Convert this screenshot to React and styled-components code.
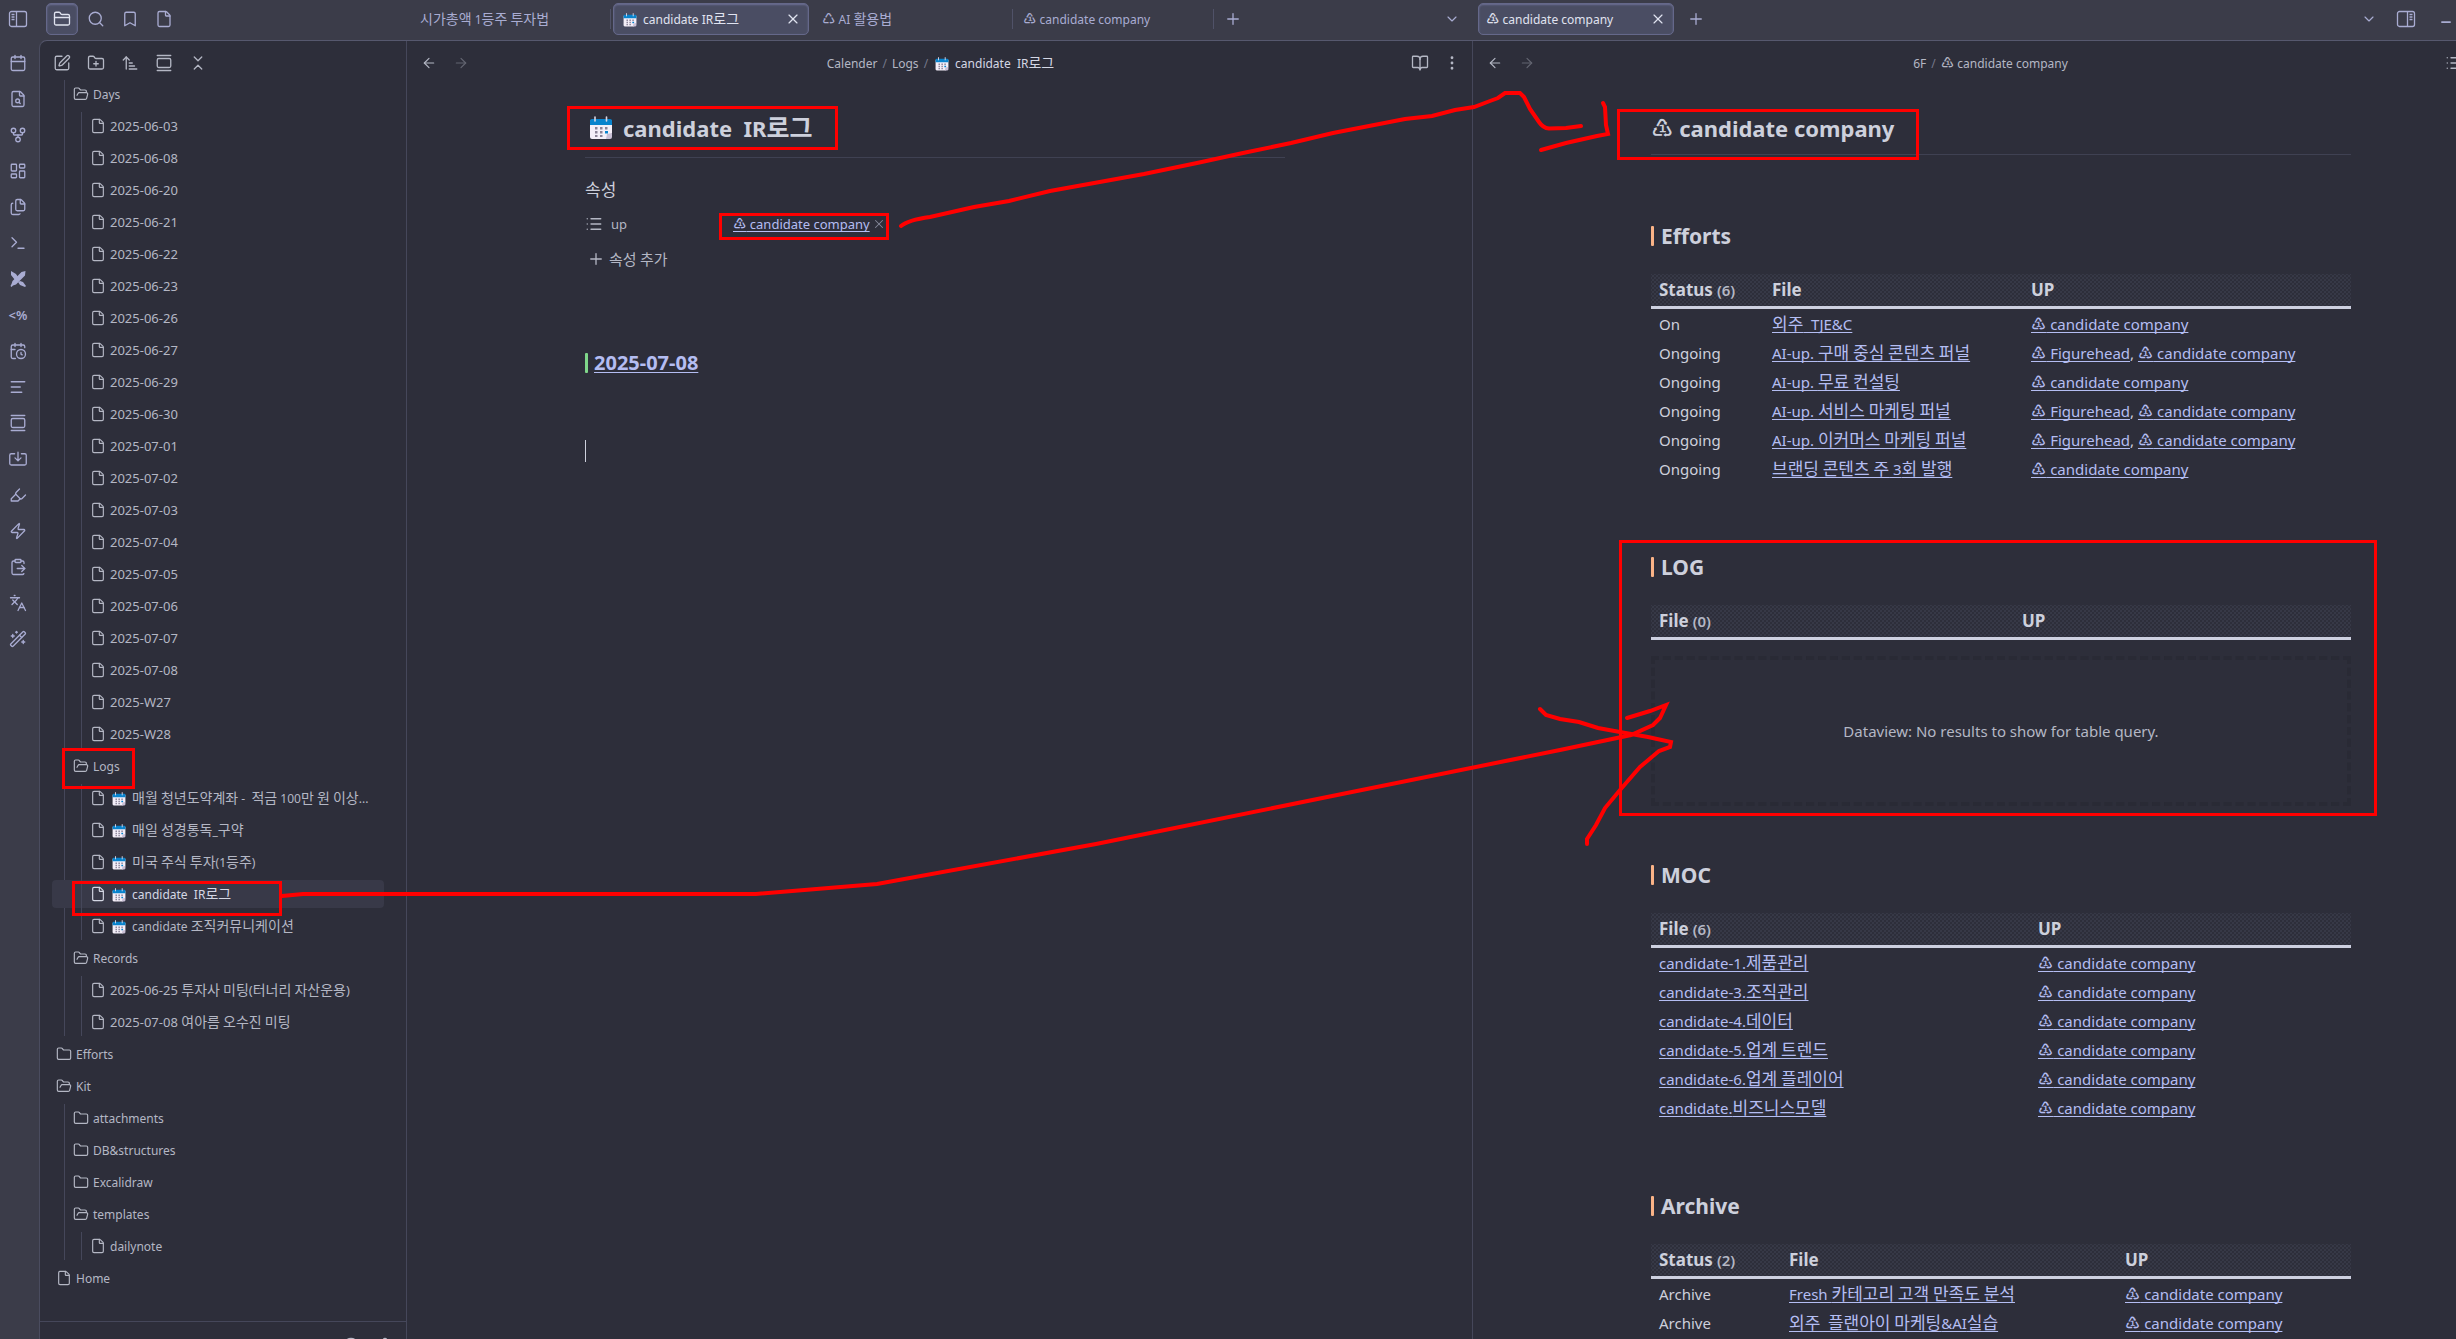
import React from "react";
import styled, { createGlobalStyle, css } from "styled-components";
import {
    AlignLeft,
    ArrowLeft,
    ArrowRight,
    ArrowUpNarrowWide,
    BookOpen,
    Bookmark,
    Calendar,
    CalendarClock,
    ChevronDown,
    ChevronsDownUp,
    ChevronsUpDown,
    CircleHelp,
    ClipboardPaste,
    EllipsisVertical,
    File,
    FileSearch,
    Files,
    Folder,
    FolderClosed,
    FolderOpen,
    FolderPlus,
    GalleryVertical,
    GitFork,
    Highlighter,
    Languages,
    LayoutDashboard,
    List,
    Minus,
    Plus,
    Search,
    Settings,
    SquarePen,
    Terminal,
    WandSparkles,
    X,
    Zap,
} from "lucide-react";

const days = [
    "2025-06-03", "2025-06-08", "2025-06-20", "2025-06-21", "2025-06-22",
    "2025-06-23", "2025-06-26", "2025-06-27", "2025-06-29", "2025-06-30",
    "2025-07-01", "2025-07-02", "2025-07-03", "2025-07-04", "2025-07-05",
    "2025-07-06", "2025-07-07", "2025-07-08", "2025-W27", "2025-W28",
];

const calendarTree = [
    { name: "Days", children: days.map((name) => ({ name })) },
    {
        name: "Logs",
        children: [
            { name: "매월 청년도약계좌 -  적금 100만 원 이상...", emoji: true },
            { name: "매일 성경통독_구약", emoji: true },
            { name: "미국 주식 투자(1등주)", emoji: true },
            { name: "candidate  IR로그", emoji: true, active: true },
            { name: "candidate 조직커뮤니케이션", emoji: true },
        ],
    },
    {
        name: "Records",
        children: [
            { name: "2025-06-25 투자사 미팅(터너리 자산운용)" },
            { name: "2025-07-08 여아름 오수진 미팅" },
        ],
    },
];

const rootTree = [
    { name: "Efforts", closed: true },
    {
        name: "Kit",
        children: [
            { name: "attachments", closed: true },
            { name: "DB&structures", closed: true },
            { name: "Excalidraw", closed: true },
            { name: "templates", children: [{ name: "dailynote" }] },
        ],
    },
    { name: "Home" },
];

const company = ["candidate company"];
const both = ["Figurehead", "candidate company"];

const efforts = [
    ["On", "외주  TJE&C", company],
    ["Ongoing", "AI-up. 구매 중심 콘텐츠 퍼널", both],
    ["Ongoing", "AI-up. 무료 컨설팅", company],
    ["Ongoing", "AI-up. 서비스 마케팅 퍼널", both],
    ["Ongoing", "AI-up. 이커머스 마케팅 퍼널", both],
    ["Ongoing", "브랜딩 콘텐츠 주 3회 발행", company],
];

const moc = [
    ["candidate-1.제품관리", company],
    ["candidate-3.조직관리", company],
    ["candidate-4.데이터", company],
    ["candidate-5.업계 트렌드", company],
    ["candidate-6.업계 플레이어", company],
    ["candidate.비즈니스모델", company],
];

const archive = [
    ["Archive", "Fresh 카테고리 고객 만족도 분석", company],
    ["Archive", "외주  플랜아이 마케팅&AI실습", company],
];

// Hangul and the recycling marks are set a little larger than the latin text
function Mixed({ children }) {
    return children.split(/([가-힣]+(?: +[가-힣]+)*|[♳♺])/).map((part, i) => {
        if (/[♳♺]/.test(part)) return <Mark key={i}>{part}</Mark>;
        if (/[가-힣]/.test(part)) return <Ko key={i}>{part}</Ko>;
        return part;
    });
}

function CalendarEmoji({ size }) {
    return (
        <Emoji width={size} height={size} viewBox="0 0 24 24" aria-hidden="true">
            <path d="M3 4h18a2 2 0 0 1 2 2v11l-5 6H3a2 2 0 0 1-2-2V6a2 2 0 0 1 2-2z" fill="#f3eef8" />
            <path d="M3 3h18a2 2 0 0 1 2 2v4H1V5a2 2 0 0 1 2-2z" fill="#0883cd" />
            <path d="M23 17v4a2 2 0 0 1-2 2h-4l1-5z" fill="#c9c0d6" />
            <path d="M6 1v4M17.500 1v4" stroke="#d9d5e3" strokeWidth="1.600" strokeLinecap="round" />
            <g fill="#8b8398">
                <path d="M6 11h2.500v2.500H6zM11 11h2.500v2.500H11zM16 11h2.500v2.500H16z" />
                <path d="M6 15h2.500v2.500H6zM11 15h2.500v2.500H11z" />
                <path d="M6 19h2.500v2H6zM11 19h2.500v2H11z" />
            </g>
            <path d="M16 15h3v2.500h-3z" fill="#0883cd" />
        </Emoji>
    );
}

function PanelIcon({ right }) {
    return (
        <svg width="20" height="20" viewBox="0 0 20 20" fill="none" stroke="currentColor" strokeWidth="1.300">
            <rect x="1.500" y="2.500" width="17" height="15" rx="2" />
            {right ? (
                <path d="M11.500 3v14M13.500 5.500h3M13.500 8h3M13.500 10.500h3" />
            ) : (
                <path d="M8.500 3v14M3.500 5.500h3M3.500 8h3M3.500 10.500h3" />
            )}
        </svg>
    );
}

function ExcalidrawIcon() {
    return (
        <svg width="18" height="18" viewBox="0 0 18 18" fill="currentColor">
            <path d="M2 1l5 3 2 3-3 3-4-5zM11 11l3 1 3 4-1 1-5-2-2-3z" />
            <path d="M16.500 1l-.5 4.500-9 9-3 1L2.500 17 1.500 16l1-2 1-3 9-9z" />
        </svg>
    );
}

function TrayIcon() {
    return (
        <svg width="18" height="18" viewBox="0 0 24 24" fill="none" stroke="currentColor" strokeWidth="1.750" strokeLinecap="round" strokeLinejoin="round">
            <path d="M7.500 5H3a2 2 0 0 0-2 2v11a2 2 0 0 0 2 2h18a2 2 0 0 0 2-2V7a2 2 0 0 0-2-2h-4.500M12 3v11M8 10.500l4 4 4-4" />
        </svg>
    );
}

const line = { size: 18, strokeWidth: 1.75 };

const ribbon = [
    ["Daily note", <Calendar {...line} />],
    ["Quick switcher", <FileSearch {...line} />],
    ["Graph view", <GitFork {...line} />],
    ["Canvas", <LayoutDashboard {...line} />],
    ["Templates", <Files {...line} />],
    ["Command palette", <Terminal {...line} />],
    ["Excalidraw", <ExcalidrawIcon />],
    ["Templater", "<%"],
    ["Periodic notes", <CalendarClock {...line} />],
    ["Outline", <AlignLeft {...line} />],
    ["Cards", <GalleryVertical {...line} />],
    ["Import", <TrayIcon />],
    ["Highlighter", <Highlighter {...line} />],
    ["Run macro", <Zap {...line} />],
    ["Paste", <ClipboardPaste {...line} />],
    ["Translate", <Languages {...line} />],
    ["Wand", <WandSparkles {...line} />],
];

function TreeItem({ item, depth }) {
    const small = { size: 16, strokeWidth: 1.75 };
    const icon = item.children ? <FolderOpen {...small} /> : item.closed ? <Folder {...small} /> : <File {...small} />;

    return (
        <li>
            <TreeRow type="button" $depth={depth} $active={item.active} $numeric={/^\d{4}-/.test(item.name)}>
                {icon}
                <span>
                    {item.emoji && <CalendarEmoji size={14} />}
                    <Mixed>{item.name}</Mixed>
                </span>
            </TreeRow>
            {item.children && <TreeList items={item.children} depth={depth + 1} />}
        </li>
    );
}

function TreeList({ items, depth }) {
    return (
        <Branch $depth={depth}>
            {items.map((item) => (
                <TreeItem key={item.name} item={item} depth={depth} />
            ))}
        </Branch>
    );
}

function Up({ names }) {
    return names.map((name, i) => (
        <React.Fragment key={name}>
            {i > 0 && ", "}
            <NoteLink href="#note">
                <Mixed>{`♳ ${name}`}</Mixed>
            </NoteLink>
        </React.Fragment>
    ));
}

function Query({ title, heads, widths, count, rows }) {
    return (
        <Section $empty={rows.length === 0}>
            <Heading $color="#fab387">{title}</Heading>
            <Table>
                <colgroup>
                    {widths.map((w) => <Col key={w} $width={w} />)}
                    <col />
                </colgroup>
                <thead>
                    <tr>
                        {heads.map((head, i) => (
                            <th key={head}>
                                {head}
                                {i === 0 && <Count>({count})</Count>}
                            </th>
                        ))}
                    </tr>
                </thead>
                <tbody>
                    {rows.map((row) => {
                        const file = row[row.length - 2];
                        return (
                            <tr key={file}>
                                {row.length === 3 && <td>{row[0]}</td>}
                                <td>
                                    <NoteLink href="#note"><Mixed>{file}</Mixed></NoteLink>
                                </td>
                                <td><Up names={row[row.length - 1]} /></td>
                            </tr>
                        );
                    })}
                </tbody>
            </Table>
            {rows.length === 0 && <NoResult>Dataview: No results to show for table query.</NoResult>}
        </Section>
    );
}

function PaneHeader({ children, outline }) {
    return (
        <PaneBar>
            <PaneButton type="button" aria-label="Back"><ArrowLeft size={16} strokeWidth={1.75} /></PaneButton>
            <PaneButton type="button" aria-label="Forward" $dim><ArrowRight size={16} strokeWidth={1.75} /></PaneButton>
            <Crumbs>{children}</Crumbs>
            {outline && <PaneButton type="button" aria-label="Outline"><List {...line} /></PaneButton>}
            <PaneButton type="button" aria-label="Reading view"><BookOpen {...line} /></PaneButton>
            <PaneButton type="button" aria-label="More options"><EllipsisVertical {...line} /></PaneButton>
        </PaneBar>
    );
}

function Annotations() {
    return (
        <Ink viewBox="0 0 2456 1339" width="2456" height="1339" aria-hidden="true">
            <g strokeWidth="3">
                <path d="M568.500 107.500H836.500V148.500H568.500z" />
                <path d="M720.500 214.500H887.500V238.500H720.500z" />
                <path d="M1618.500 110.500H1917.500V158.500H1618.500z" />
                <path d="M1620.500 541.500H2375.500V814.500H1620.500z" />
                <path d="M63.500 749.500H133.500V787.500H63.500z" />
                <path d="M73.500 882.500H280.500V914.500H73.500z" />
            </g>
            <g strokeWidth="4">
                <path d="M901 226Q908 220 930 217L974 207L1009 201L1050 191L1144 174L1197 163L1243 153L1291 143L1333 133L1405 119L1432 116L1455 110L1474 107L1490 101L1498 98L1505 93H1520L1524 97L1530 109L1539 122Q1543 128 1549 128.500L1566 128L1581 126" />
                <path d="M1603 103L1605 107L1606 125L1608 134L1597 136L1566 143L1541 150" />
                <path d="M282 896L303 894H756L877 884L1096 844L1347 793L1560 750L1631 735L1653 725L1660 718L1666 705L1650 711L1627 718" />
                <path d="M1540 709L1546 715L1560 719L1579 722L1598 728L1620 732L1648 737L1671 742L1670 747L1659 751L1640 767L1620 790L1605 808L1596 825L1587 839V844" />
            </g>
        </Ink>
    );
}

function App() {
    return (
        <Shell>
            <GlobalStyle />
            <Frame>
                <TopBar>
                    <SideTabs>
                        <PanelToggle type="button" aria-label="Toggle left sidebar"><PanelIcon /></PanelToggle>
                        <SideTab type="button" aria-label="Files" $active><FolderClosed {...line} /></SideTab>
                        <SideTab type="button" aria-label="Search"><Search {...line} /></SideTab>
                        <SideTab type="button" aria-label="Bookmarks"><Bookmark {...line} /></SideTab>
                        <SideTab type="button" aria-label="Notes"><File {...line} /></SideTab>
                    </SideTabs>
                    <TabStrip>
                        <TabSlot $line>
                            <Tab type="button"><TabName><Mixed>시가총액 1등주 투자법</Mixed></TabName></Tab>
                        </TabSlot>
                        <TabSlot>
                            <Tab type="button" $active>
                                <TabName><CalendarEmoji size={14} /><Mixed>candidate IR로그</Mixed></TabName>
                                <X size={16} strokeWidth={1.75} />
                            </Tab>
                        </TabSlot>
                        <TabSlot $line>
                            <Tab type="button"><TabName><Mixed>♺ AI 활용법</Mixed></TabName></Tab>
                        </TabSlot>
                        <TabSlot $line>
                            <Tab type="button"><TabName><Mixed>♳ candidate company</Mixed></TabName></Tab>
                        </TabSlot>
                        <BarButton type="button" aria-label="New tab"><Plus {...line} /></BarButton>
                        <Spacer />
                        <BarButton type="button" aria-label="Tab list"><ChevronDown size={16} strokeWidth={1.75} /></BarButton>
                    </TabStrip>
                    <TabStrip>
                        <TabSlot>
                            <Tab type="button" $active>
                                <TabName><Mixed>♳ candidate company</Mixed></TabName>
                                <X size={16} strokeWidth={1.75} />
                            </Tab>
                        </TabSlot>
                        <BarButton type="button" aria-label="New tab"><Plus {...line} /></BarButton>
                        <Spacer />
                        <BarButton type="button" aria-label="Tab list"><ChevronDown size={16} strokeWidth={1.75} /></BarButton>
                        <BarButton type="button" aria-label="Toggle right sidebar"><PanelIcon right /></BarButton>
                        <MinimizeButton type="button" aria-label="Minimize"><Minus size={14} strokeWidth={3} /></MinimizeButton>
                    </TabStrip>
                </TopBar>
                <Main>
                    <Ribbon aria-label="Ribbon">
                        {ribbon.map(([label, icon]) => (
                            <RibbonButton type="button" key={label} aria-label={label}>{icon}</RibbonButton>
                        ))}
                    </Ribbon>
                    <Workspace>
                        <Sidebar>
                            <Toolbar>
                                <ToolButton type="button" aria-label="New note"><SquarePen {...line} /></ToolButton>
                                <ToolButton type="button" aria-label="New folder"><FolderPlus {...line} /></ToolButton>
                                <ToolButton type="button" aria-label="Sort"><ArrowUpNarrowWide {...line} /></ToolButton>
                                <ToolButton type="button" aria-label="Reveal file"><GalleryVertical {...line} /></ToolButton>
                                <ToolButton type="button" aria-label="Collapse all"><ChevronsDownUp {...line} /></ToolButton>
                            </Toolbar>
                            <Tree>
                                <TreeList items={calendarTree} depth={1} />
                                <TreeList items={rootTree} depth={0} />
                            </Tree>
                            <Vault>
                                <VaultName type="button"><ChevronsUpDown size={14} strokeWidth={1.75} />candidate</VaultName>
                                <ToolButton type="button" aria-label="Help"><CircleHelp {...line} /></ToolButton>
                                <ToolButton type="button" aria-label="Settings"><Settings {...line} /></ToolButton>
                            </Vault>
                        </Sidebar>

                        <Pane>
                            <PaneHeader>
                                <span>Calender</span><i>/</i><span>Logs</span><i>/</i>
                                <Current><CalendarEmoji size={14} /><Mixed>candidate  IR로그</Mixed></Current>
                            </PaneHeader>
                            <Scroll>
                                <Note>
                                    <Title><CalendarEmoji size={24} /><Mixed>candidate  IR로그</Mixed></Title>
                                    <PropsTitle><Mixed>속성</Mixed></PropsTitle>
                                    <PropRow>
                                        <PropKey><List {...line} />up</PropKey>
                                        <NoteLink href="#note"><Mixed>♳ candidate company</Mixed></NoteLink>
                                        <RemoveButton type="button" aria-label="Remove"><X size={14} strokeWidth={1.75} /></RemoveButton>
                                    </PropRow>
                                    <AddProp type="button"><Plus {...line} /><Mixed>속성 추가</Mixed></AddProp>
                                    <DateHeading $color="#7fd68a">
                                        <NoteLink href="#2025-07-08">2025-07-08</NoteLink>
                                    </DateHeading>
                                    <Caret />
                                </Note>
                            </Scroll>
                        </Pane>

                        <Pane>
                            <PaneHeader outline>
                                <span>6F</span><i>/</i><span><Mixed>♳ candidate company</Mixed></span>
                            </PaneHeader>
                            <Scroll>
                                <Note>
                                    <Title><Mixed>♳ candidate company</Mixed></Title>
                                    <Queries>
                                        <Query title="Efforts" heads={["Status", "File", "UP"]} widths={[113, 259]} count={6} rows={efforts} />
                                        <Query title="LOG" heads={["File", "UP"]} widths={[363]} count={0} rows={[]} />
                                        <Query title="MOC" heads={["File", "UP"]} widths={[379]} count={6} rows={moc} />
                                        <Query title="Archive" heads={["Status", "File", "UP"]} widths={[130, 336]} count={2} rows={archive} />
                                    </Queries>
                                </Note>
                            </Scroll>
                        </Pane>
                    </Workspace>
                </Main>
            </Frame>
            <Annotations />
        </Shell>
    );
}

export default App;

const GlobalStyle = createGlobalStyle`
    * {
        box-sizing: border-box;
    }

    body {
        margin: 0;
        background: #2d2e3a;
        color: #cdd0dc;
        font-family: "Noto Sans", "Noto Sans CJK KR", sans-serif;
        font-size: 12px;
        --ko: 14px;
        --mark: 15px;
    }

    button {
        display: flex;
        align-items: center;
        justify-content: center;
        padding: 0;
        border: 0;
        background: none;
        color: inherit;
        font: inherit;
        cursor: pointer;
    }

    ul {
        margin: 0;
        padding: 0;
        list-style: none;
    }

    svg {
        flex-shrink: 0;
    }
`;

const Ko = styled.span`
    font-family: "Noto Sans CJK KR", sans-serif;
    font-size: var(--ko);
    line-height: 1;
`;

const Mark = styled.span`
    font-family: "DejaVu Sans", sans-serif;
    font-size: var(--mark);
    line-height: 1;
`;

const Emoji = styled.svg`
    margin: 0 6px 0 2px;
    vertical-align: middle;
`;

const Shell = styled.div`
    position: relative;
    height: 100vh;
    overflow: hidden;
`;

const Frame = styled.div`
    display: flex;
    flex-direction: column;
    height: calc(100vh + 30px);
    margin-right: -83px;
    background: #3b3c49;
`;

const TopBar = styled.header`
    display: flex;
    flex: 0 0 40px;
    color: #a9acd2;
`;

const SideTabs = styled.div`
    display: flex;
    flex: 0 0 407px;
    padding-top: 3px;
`;

const PanelToggle = styled.button`
    width: 36px;
    height: 32px;
    margin-right: 9px;
`;

const raised = css`
    border: 1px solid #65688a;
    border-radius: 5px;
    background: #4a4d63;
    box-shadow: inset 0 1px 2px #6d7094;
    color: #e0e3f0;
`;

const SideTab = styled.button`
    width: 32px;
    height: 32px;
    margin: 0 1px;
    ${(props) => props.$active && raised}
`;

const TabStrip = styled.div`
    display: flex;
    flex: 0 0 calc((100% - 407px) / 2);
    min-width: 0;
    padding: 3px 3px 0;

    &:last-child {
        padding-right: 71px;
    }
`;

const TabSlot = styled.div`
    position: relative;
    width: 201px;
    padding: 0 3px 0 2px;

    ${(props) => props.$line && css`
        &::after {
            content: "";
            position: absolute;
            top: 6px;
            right: 0;
            width: 1px;
            height: 20px;
            background: #505268;
        }
    `}
`;

const Tab = styled.button`
    width: 100%;
    height: 32px;
    padding: 0 7px;
    border: 1px solid transparent;
    justify-content: space-between;
    ${(props) => props.$active && raised}
`;

const TabName = styled.span`
    white-space: pre;
`;

const BarButton = styled.button`
    width: 37px;
    height: 32px;
`;

const MinimizeButton = styled(BarButton)`
    width: 44px;
    padding-top: 6px;
`;

const Spacer = styled.div`
    flex: 1;
`;

const Main = styled.div`
    display: flex;
    flex: 1;
    min-height: 0;
`;

const Ribbon = styled.nav`
    flex: 0 0 39px;
    padding-top: 5px;
    color: #a9acd2;
`;

const RibbonButton = styled.button`
    width: 36px;
    height: 36px;
    font-size: 13px;
    font-weight: 600;
`;

const Workspace = styled.div`
    display: flex;
    flex: 1;
    min-width: 0;
    border-top: 1px solid #56586e;
    border-left: 1px solid #4a4c5f;
    border-radius: 8px 0 0 0;
    background: #2d2e3a;
`;

const Sidebar = styled.aside`
    display: flex;
    flex: 0 0 367px;
    flex-direction: column;
    border-right: 1px solid #45475a;
    color: #b4b7c4;
`;

const Toolbar = styled.div`
    display: flex;
    padding: 13px 0 8px 5px;
`;

const ToolButton = styled.button`
    width: 34px;
    height: 18px;
`;

const Tree = styled.div`
    display: flex;
    flex: 1;
    flex-direction: column;
    gap: 4px;
    min-height: 0;
    padding: 0 22px 0 12px;
    overflow: hidden;
`;

const Branch = styled.ul`
    position: relative;
    display: flex;
    flex-direction: column;
    gap: 4px;

    li > & {
        margin-top: 4px;
    }

    ${(props) => props.$depth > 0 && css`
        &::before {
            content: "";
            position: absolute;
            top: 0;
            bottom: 0;
            left: ${props.$depth * 17 - 5}px;
            width: 1px;
            background: #45475a;
        }
    `}
`;

const TreeRow = styled.button`
    width: 100%;
    height: 28px;
    gap: 4px;
    padding-left: ${(props) => 4 + props.$depth * 17}px;
    border-radius: 4px;
    justify-content: flex-start;
    font-size: ${(props) => (props.$numeric ? 13 : 12)}px;
    white-space: pre;

    ${(props) => props.$active && css`
        background: #383948;
        color: #d4d7e4;
    `}
`;

const Vault = styled.div`
    display: flex;
    align-items: center;
    flex: 0 0 48px;
    padding-right: 4px;
    border-top: 1px solid #45475a;
`;

const VaultName = styled.button`
    flex: 1;
    gap: 8px;
    padding-left: 16px;
    justify-content: flex-start;
    font-weight: 600;
`;

const Pane = styled.section`
    display: flex;
    flex: 1 1 0;
    flex-direction: column;
    min-width: 0;
    border-right: 1px solid #45475a;
`;

const PaneBar = styled.div`
    display: flex;
    flex: 0 0 44px;
    align-items: center;
    padding: 0 4px 0 6px;
    color: #b4b7c4;
`;

const PaneButton = styled.button`
    width: 32px;
    height: 32px;
    opacity: ${(props) => (props.$dim ? 0.4 : 1)};
`;

const Crumbs = styled.div`
    display: flex;
    flex: 1;
    align-items: center;
    justify-content: center;
    white-space: pre;

    i {
        margin: 0 5px;
        color: #75788a;
        font-style: normal;
    }
`;

const Current = styled.span`
    color: #d4d7e4;
`;

const Scroll = styled.div`
    flex: 1;
    min-height: 0;
    padding-right: 9px;
    overflow: hidden;
`;

const Note = styled.article`
    max-width: 700px;
    margin: 0 auto;
    font-size: 15px;
    --ko: 17px;
    --mark: 17px;
`;

const Title = styled.h1`
    margin: 0;
    padding: 28px 0 11px;
    border-bottom: 1px solid #3f4152;
    font-size: 22px;
    line-height: 30px;
    white-space: pre;
    --ko: 25px;
    --mark: 25px;

    svg {
        margin: 0 10px 6px 4px;
    }
`;

const PropsTitle = styled.div`
    margin: 20px 0 4px;
    line-height: 24px;
`;

const PropRow = styled.div`
    display: flex;
    align-items: center;
    height: 35px;
    font-size: 13px;
    --mark: 15px;
`;

const PropKey = styled.div`
    display: flex;
    align-items: center;
    flex: 0 0 148px;
    gap: 8px;
    color: #b4b7c4;
`;

const RemoveButton = styled.button`
    margin-left: 2px;
    color: #85889a;
`;

const AddProp = styled.button`
    height: 35px;
    gap: 4px;
    padding-left: 2px;
    color: #b4b7c4;
    --ko: 15px;
`;

const Heading = styled.h2`
    display: flex;
    align-items: center;
    gap: 7px;
    margin: 0 0 24px;
    font-size: 21px;
    line-height: 28px;

    &::before {
        content: "";
        width: 3px;
        height: 20px;
        border-radius: 1px;
        background: ${(props) => props.$color};
    }
`;

const DateHeading = styled(Heading)`
    margin: 73px 0 63px;
    gap: 6px;
    font-size: 20px;
`;

const Caret = styled.div`
    width: 1px;
    height: 22px;
    background: #cdd0dc;
`;

const NoteLink = styled.a`
    color: #b4bdf2;
    text-decoration: underline;
    text-decoration-thickness: 1px;
    text-decoration-skip-ink: none;
    text-underline-offset: 2px;
    white-space: pre;
`;

const Queries = styled.div`
    padding-top: 67px;
`;

const Section = styled.div`
    margin-bottom: ${(props) => (props.$empty ? 55 : 70)}px;
`;

const Table = styled.table`
    width: 100%;
    table-layout: fixed;
    border-collapse: separate;
    border-spacing: 0;
    line-height: 20px;

    thead {
        background-image: radial-gradient(#414353 20%, transparent 30%), radial-gradient(#414353 20%, transparent 30%);
        background-position: 0 0, 2px 2px;
        background-size: 4px 4px;
    }

    th {
        height: 35px;
        padding: 0 8px;
        border-bottom: 3px solid #cdd0e0;
        font-size: 17px;
        text-align: left;
    }

    td {
        height: 29px;
        padding: 0 8px;
        white-space: nowrap;
    }
`;

const Col = styled.col`
    width: ${(props) => props.$width}px;
`;

const Count = styled.span`
    margin-left: 4px;
    color: #b4b7c4;
    font-size: 15px;
    font-weight: 600;
`;

const NoResult = styled.div`
    display: flex;
    align-items: center;
    justify-content: center;
    height: 150px;
    margin-top: 16px;
    border: 4px dashed #292a35;
    color: #b4b7c4;
`;

// Hand-drawn arrows and frames, above the whole window
const Ink = styled.svg`
    position: absolute;
    top: 0;
    left: 0;
    fill: none;
    stroke: #ff0000;
    stroke-linecap: round;
    pointer-events: none;
`;
